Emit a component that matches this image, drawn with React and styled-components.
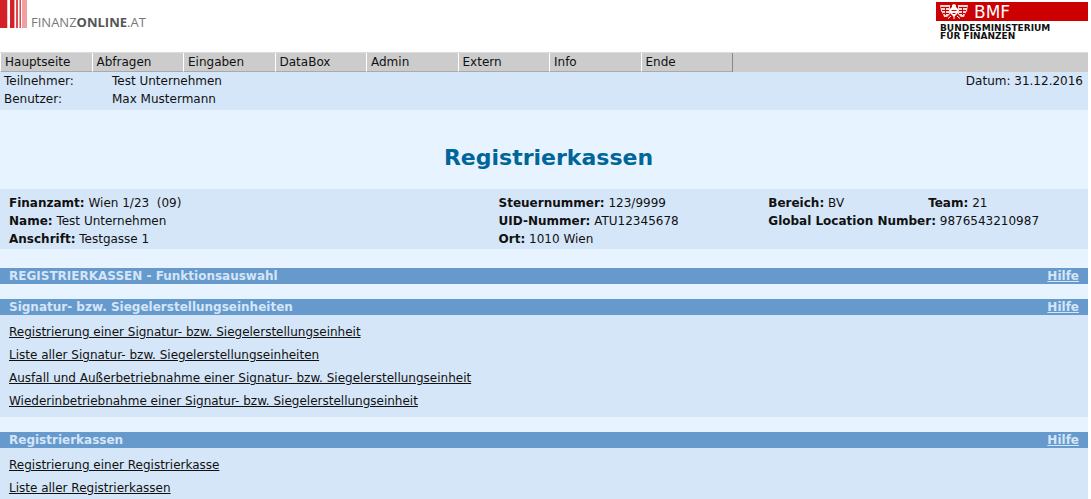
import styled, { createGlobalStyle } from "styled-components";

const menuItems = [
	"Hauptseite",
	"Abfragen",
	"Eingaben",
	"DataBox",
	"Admin",
	"Extern",
	"Info",
	"Ende",
];

const sections = [
	{
		title: "Signatur- bzw. Siegelerstellungseinheiten",
		links: [
			"Registrierung einer Signatur- bzw. Siegelerstellungseinheit",
			"Liste aller Signatur- bzw. Siegelerstellungseinheiten",
			"Ausfall und Außerbetriebnahme einer Signatur- bzw. Siegelerstellungseinheit",
			"Wiederinbetriebnahme einer Signatur- bzw. Siegelerstellungseinheit",
		],
	},
	{
		title: "Registrierkassen",
		links: ["Registrierung einer Registrierkasse", "Liste aller Registrierkassen"],
	},
];

const LogoBars = () => (
	<svg width="27" height="28" viewBox="0 0 27 28" aria-hidden="true">
		<rect x="0" width="7" height="28" fill="#d42027" />
		<rect x="7" width="1" height="28" fill="#f6c6c8" />
		<rect x="10" width="4" height="28" fill="#d42027" />
		<rect x="14" width="1" height="28" fill="#f0a0a2" />
		<rect x="16" width="2" height="28" fill="#dc4a4f" />
		<rect x="19.5" width="1.5" height="28" fill="#dc4a4f" />
		<rect x="22" width="1" height="28" fill="#f0a0a2" />
		<rect x="23" width="4" height="28" fill="#f0a0a2" />
	</svg>
);

const Eagle = () => (
	<svg width="28" height="15" viewBox="0 0 28 15" aria-hidden="true">
		<g fill="#fff" fillOpacity="0.85">
			<path d="M0 1h10l1 3-1 6-3 3H4l-1-3-2-3z" />
			<path d="M28 1H18l-1 3 1 6 3 3h3l1-3 2-3z" />
		</g>
		<path
			d="M1 3.5h8M2 6.5h7M3 9.5h6M27 3.5h-8M26 6.5h-7M25 9.5h-6M5.5 4v7M22.5 4v7M10.5 2v8M17.5 2v8"
			stroke="#cc0000"
			fill="none"
		/>
		<path d="M12 1l2-1 2 1v2l2 2v4l-4 4-4-4V5l2-2z" fill="#fff" />
		<path d="M11 12l-3 2.5M17 12l3 2.5M14 12v3" stroke="#fff" fill="none" />
		<path d="M11.5 6.5h5M12.5 9.5h3" stroke="#cc0000" fill="none" />
	</svg>
);

const Field = ({ label, children }) => (
	<div>
		<b>{label}:</b> {children}
	</div>
);

const SectionBar = ({ title, as }) => (
	<Bar>
		<BarTitle as={as}>{title}</BarTitle>
		<HelpLink href="#hilfe">Hilfe</HelpLink>
	</Bar>
);

export default function App() {
	return (
		<>
			<GlobalStyle />
			<Page>
				<Header>
					<Logo>
						<LogoBars />
						<LogoText>
							FINANZ<b>ONLINE</b>.AT
						</LogoText>
					</Logo>
					<Ministry>
						<MinistryFlag>
							<Eagle />
							BMF
						</MinistryFlag>
						<MinistryName>
							BUNDESMINISTERIUM
							<br />
							FÜR FINANZEN
						</MinistryName>
					</Ministry>
				</Header>
				<MenuBar>
					<Menu>
						{menuItems.map((item) => (
							<MenuLink key={item} href={`#${item.toLowerCase()}`}>
								{item}
							</MenuLink>
						))}
					</Menu>
				</MenuBar>
				<UserStrip>
					<UserData>
						<dt>Teilnehmer:</dt>
						<dd>Test Unternehmen</dd>
						<dt>Benutzer:</dt>
						<dd>Max Mustermann</dd>
					</UserData>
					<div>Datum: 31.12.2016</div>
				</UserStrip>
				<Title>Registrierkassen</Title>
				<Info>
					<div>
						<Field label="Finanzamt">Wien 1/23&nbsp; (09)</Field>
						<Field label="Name">Test Unternehmen</Field>
						<Field label="Anschrift">Testgasse 1</Field>
					</div>
					<div>
						<Field label="Steuernummer">123/9999</Field>
						<Field label="UID-Nummer">ATU12345678</Field>
						<Field label="Ort">1010 Wien</Field>
					</div>
					<div>
						<Split>
							<Field label="Bereich">BV</Field>
							<Field label="Team">21</Field>
						</Split>
						<Field label="Global Location Number">9876543210987</Field>
					</div>
				</Info>
				<Sections>
					<SectionBar title="REGISTRIERKASSEN - Funktionsauswahl" />
					{sections.map((section) => (
						<section key={section.title}>
							<SectionBar title={section.title} as="h3" />
							<LinkList>
								{section.links.map((link) => (
									<li key={link}>
										<a href="#funktion">{link}</a>
									</li>
								))}
							</LinkList>
						</section>
					))}
				</Sections>
			</Page>
		</>
	);
}

const GlobalStyle = createGlobalStyle`
	* {
		box-sizing: border-box;
	}
	html {
		overflow: hidden;
	}
	body {
		margin: 0;
		background: #fff;
		color: #111;
		font-family: Verdana, "DejaVu Sans", sans-serif;
		font-size: 12px;
		line-height: 18px;
	}
`;

const Page = styled.div`
	margin-right: 3px;
	background: #e7f4ff;
`;

const Header = styled.header`
	display: flex;
	justify-content: space-between;
	align-items: flex-start;
	height: 52px;
	background: #fff;
`;

const Logo = styled.div`
	display: flex;
	align-items: flex-end;
	gap: 4px;
	svg {
		display: block;
	}
`;

const LogoText = styled.span`
	color: #777;
	font-family: "Open Sans", sans-serif;
	font-size: 13px;
	line-height: 12px;
	b {
		color: #555;
	}
`;

const Ministry = styled.div`
	width: 152px;
	padding-top: 2px;
`;

const MinistryFlag = styled.div`
	display: flex;
	align-items: center;
	gap: 6px;
	height: 19px;
	padding-left: 4px;
	background: #cc0000;
	color: #fff;
	font-size: 17px;
`;

const MinistryName = styled.div`
	padding: 3px 0 0 4px;
	font-size: 9px;
	font-weight: bold;
	line-height: 8px;
`;

const MenuBar = styled.nav`
	background: #ccc;
	border-top: 1px solid #ddd;
`;

const Menu = styled.div`
	display: grid;
	grid-template-columns: repeat(8, 1fr);
	max-width: 733px;
	border-right: 1px solid #888;
`;

const MenuLink = styled.a`
	padding-left: 4px;
	border-left: 1px solid #fff;
	border-bottom: 1px solid #aaa;
	color: #111;
	text-decoration: none;
`;

const UserStrip = styled.div`
	display: flex;
	justify-content: space-between;
	padding: 0 5px 2px 4px;
	background: #d5e6f8;
`;

const UserData = styled.dl`
	display: grid;
	grid-template-columns: 108px auto;
	margin: 0;
	dd {
		margin: 0;
	}
`;

const Title = styled.h1`
	margin: 0;
	padding: 32px 0 15px 9px;
	color: #006699;
	font-size: 22px;
	line-height: 32px;
	text-align: center;
`;

const Info = styled.div`
	display: grid;
	grid-template-columns: 49fr 27fr 32fr;
	padding: 5px 0 1px 9px;
	background: #d5e6f8;
`;

const Split = styled.div`
	display: grid;
	grid-template-columns: 1fr 1fr;
`;

const Sections = styled.main`
	display: flex;
	flex-direction: column;
	gap: 15px;
	padding-top: 19px;
`;

const Bar = styled.div`
	display: flex;
	justify-content: space-between;
	padding: 0 9px;
	background: #6699cc;
	color: #d5e6f8;
	line-height: 16px;
`;

const BarTitle = styled.h2`
	margin: 0;
	font-size: 12px;
`;

const HelpLink = styled.a`
	color: #d5e6f8;
	font-weight: bold;
`;

const LinkList = styled.ul`
	display: flex;
	flex-direction: column;
	gap: 5px;
	margin: 0;
	padding: 8px 9px 7px;
	background: #d5e6f8;
	list-style: none;
	a {
		color: #111;
	}
`;
